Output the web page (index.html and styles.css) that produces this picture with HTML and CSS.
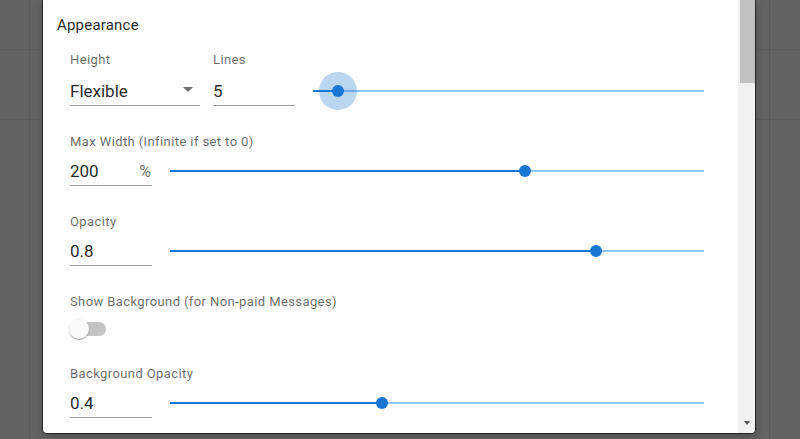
FILE: index.html
```html
<!DOCTYPE html>
<html>
<head>
<meta charset="utf-8">
<link rel="stylesheet" href="styles.css">
</head>
<body>
<div class="backdrop">
  <div class="dialog">
    <div class="content">
      <h2 class="section-title">Appearance</h2>
      <div class="form">
        <div class="row row-split">
          <div class="field field-select">
            <div class="label">Height</div>
            <div class="input select">
              <span class="value">Flexible</span>
              <svg class="caret" viewBox="0 0 24 24" width="24" height="24"><path d="M7 10l5 5 5-5z"/></svg>
            </div>
          </div>
          <div class="field field-lines">
            <div class="label">Lines</div>
            <div class="input"><span class="value">5</span></div>
          </div>
          <div class="slider slider-wide">
            <div class="rail"></div>
            <div class="track" style="width:6.4%"></div>
            <div class="thumb thumb-focus" style="left:6.4%"></div>
          </div>
        </div>

        <div class="row">
          <div class="label">Max Width (Infinite if set to 0)</div>
          <div class="controls">
            <div class="input input-short"><span class="value">200</span><span class="adorn">%</span></div>
            <div class="slider">
              <div class="rail"></div>
              <div class="track" style="width:66.5%"></div>
              <div class="thumb" style="left:66.5%"></div>
            </div>
          </div>
        </div>

        <div class="row">
          <div class="label">Opacity</div>
          <div class="controls">
            <div class="input input-short"><span class="value">0.8</span></div>
            <div class="slider">
              <div class="rail"></div>
              <div class="track" style="width:79.8%"></div>
              <div class="thumb" style="left:79.8%"></div>
            </div>
          </div>
        </div>

        <div class="row row-toggle">
          <div class="label">Show Background (for Non-paid Messages)</div>
          <div class="switch">
            <div class="switch-track"></div>
            <div class="switch-thumb"></div>
          </div>
        </div>

        <div class="row">
          <div class="label">Background Opacity</div>
          <div class="controls">
            <div class="input input-short"><span class="value">0.4</span></div>
            <div class="slider">
              <div class="rail"></div>
              <div class="track" style="width:39.7%"></div>
              <div class="thumb" style="left:39.7%"></div>
            </div>
          </div>
        </div>
      </div>
    </div>
    <div class="scrollbar">
      <div class="sb-thumb"></div>
      <div class="sb-space"></div>
      <div class="sb-arrow"></div>
    </div>
  </div>
</div>
</body>
</html>
```

FILE: styles.css
```css
* { box-sizing: border-box; }
html, body { margin: 0; padding: 0; }
body {
  width: 800px;
  height: 439px;
  overflow: hidden;
  background-color: #636363;
  background-image:
    linear-gradient(to right, transparent 29px, #5b5b5b 29px, #5b5b5b 30px, transparent 30px),
    linear-gradient(to right, transparent 769px, #5b5b5b 769px, #5b5b5b 770px, transparent 770px),
    linear-gradient(to bottom, transparent 49px, #5d5d5d 49px, #5d5d5d 50px, transparent 50px),
    linear-gradient(to bottom, transparent 119px, #5d5d5d 119px, #5d5d5d 120px, transparent 120px);
  font-family: Roboto, "Liberation Sans", Arial, sans-serif;
}
.backdrop {
  display: flex;
  padding-left: 43px;
}
.dialog {
  width: 712px;
  height: 433px;
  background: #fff;
  border-radius: 0 0 4px 4px;
  display: flex;
  box-shadow: 0 0 0 1px rgba(0,0,0,0.55), 0 3px 8px rgba(0,0,0,0.25);
  overflow: hidden;
}
.content {
  flex: 1;
  padding: 15px 34px 0 14px;
  color: rgba(0,0,0,0.87);
}
.section-title {
  margin: 0;
  font-size: 15px;
  line-height: 20px;
  font-weight: 400;
  letter-spacing: 0.2px;
  color: rgba(0,0,0,0.87);
}
.form {
  padding-left: 13px;
  padding-top: 15px;
}
.row {
  margin-bottom: 26px;
}
.row-split {
  display: flex;
  align-items: flex-end;
}
.label {
  font-size: 13px;
  line-height: 20px;
  color: rgba(0,0,0,0.6);
  letter-spacing: 0.4px;
  white-space: nowrap;
}
.field-select { width: 130px; }
.field-lines { width: 82px; margin-left: 13px; }
.input {
  height: 34px;
  border-bottom: 1px solid #9e9e9e;
  padding-bottom: 4px;
  display: flex;
  align-items: flex-end;
  font-size: 17px;
  line-height: 19px;
  color: rgba(0,0,0,0.87);
  position: relative;
}
.field .input { height: 36px; }
.select .value { flex: 1; }
.caret {
  fill: #707070;
  align-self: center;
  margin-top: 7px;
}
.input-short { width: 82px; flex: none; }
.input-short .value { flex: 1; }
.adorn {
  font-size: 16px;
  color: rgba(0,0,0,0.6);
  margin-right: 1px;
}
.controls {
  display: flex;
  align-items: flex-end;
}
.slider {
  flex: 1;
  height: 30px;
  position: relative;
  display: flex;
  align-items: center;
  margin-left: 18px;
}
.rail {
  width: 100%;
  height: 2px;
  background: #90c4f8;
}
.track {
  position: absolute;
  left: 0;
  top: 14px;
  height: 2px;
  background: #1976d2;
}
.thumb {
  position: absolute;
  top: 9px;
  width: 12px;
  height: 12px;
  margin-left: -6px;
  border-radius: 50%;
  background: #1976d2;
}
.thumb-focus::before {
  content: "";
  position: absolute;
  left: -13px;
  top: -13px;
  width: 38px;
  height: 38px;
  border-radius: 50%;
  background: rgba(25,118,210,0.3);
}
.row-toggle { margin-bottom: 25px; }
.switch {
  position: relative;
  width: 37px;
  height: 20px;
  margin-top: 7px;
  margin-left: -1px;
}
.switch-track {
  position: absolute;
  left: 3px;
  top: 3px;
  width: 34px;
  height: 14px;
  border-radius: 7px;
  background: #c4c4c4;
}
.switch-thumb {
  position: absolute;
  left: 0;
  top: 0;
  width: 20px;
  height: 20px;
  border-radius: 50%;
  background: #fafafa;
  box-shadow: 0 2px 1px -1px rgba(0,0,0,0.2), 0 1px 1px 0 rgba(0,0,0,0.14), 0 1px 3px 0 rgba(0,0,0,0.12);
}
.scrollbar {
  width: 17px;
  flex: none;
  background: #f1f1f1;
  display: flex;
  flex-direction: column;
  align-items: center;
}
.sb-thumb {
  width: 15px;
  height: 83px;
  background: #c1c1c1;
  margin-left: 1px;
}
.sb-space { flex: 1; }
.sb-arrow {
  width: 0;
  height: 0;
  border-left: 3.5px solid transparent;
  border-right: 3.5px solid transparent;
  border-top: 4px solid #505050;
  margin-bottom: 8px;
  margin-left: 1px;
}
```
